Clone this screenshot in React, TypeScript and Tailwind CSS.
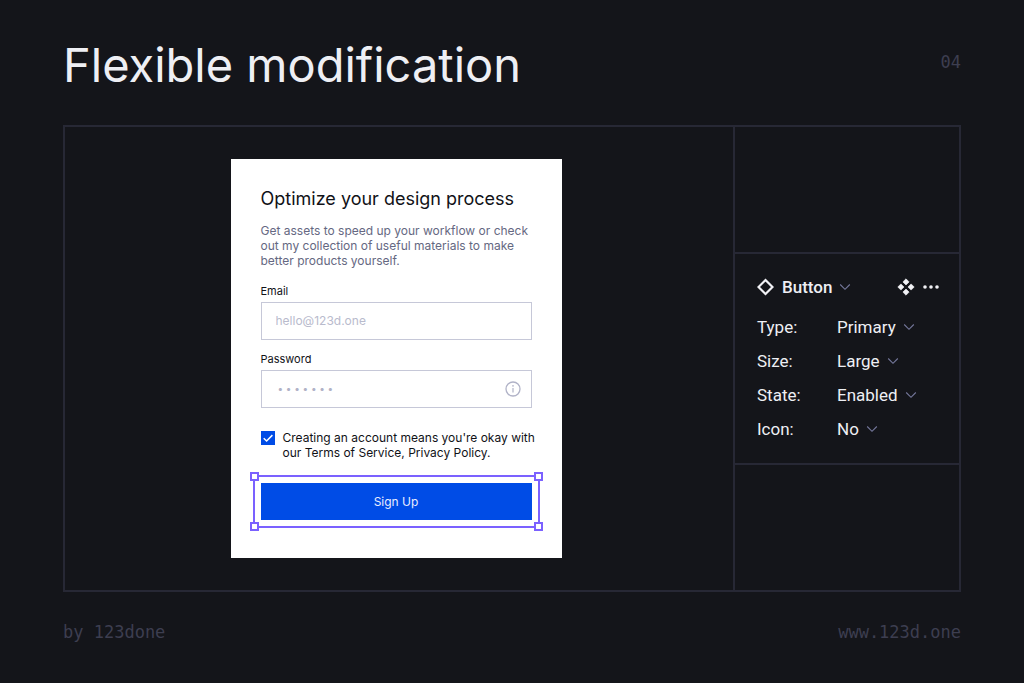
import { useState } from "react";

const properties = [
  { name: "Type", options: ["Primary", "Secondary"] },
  { name: "Size", options: ["Large", "Small"] },
  { name: "State", options: ["Enabled", "Disabled"] },
  { name: "Icon", options: ["No", "Yes"] },
];

const handles = [
  "-left-[5px] -top-[5px]",
  "-right-[5px] -top-[5px]",
  "-left-[5px] -bottom-[5px]",
  "-right-[5px] -bottom-[5px]",
];

function Chevron() {
  return (
    <svg width="12" height="8" viewBox="0 0 12 8" fill="none" stroke="#74779a" strokeWidth="1.1" aria-hidden="true" className="pointer-events-none -mx-px shrink-0">
      <path d="M1.2 1.5 6 6.3 10.8 1.5" />
    </svg>
  );
}

function SignUpForm() {
  const [accepted, setAccepted] = useState(true);
  return (
    <form
      onSubmit={(event) => event.preventDefault()}
      className="w-[331px] bg-white px-[30px] pb-[38px] pt-7 text-[#111217]"
    >
      <h2 className="whitespace-nowrap text-[18px] leading-6">Optimize your design process</h2>
      <p className="mt-3 whitespace-nowrap text-[12px] leading-[15px] text-[#656882]">
        Get assets to speed up your workflow or check
        <br />
        out my collection of useful materials to make
        <br />
        better products yourself.
      </p>
      <label htmlFor="email" className="mt-4 block text-[11px] leading-[15px]">
        Email
      </label>
      <input
        id="email"
        type="email"
        placeholder="hello@123d.one"
        className="mt-[3px] block h-[38px] w-full border border-[#c6c8d8] px-3.5 pb-0.5 text-[12px] outline-none placeholder:text-[#b9bbcd]"
      />
      <label htmlFor="password" className="mt-3 block text-[11px] leading-[15px]">
        Password
      </label>
      <div className="mt-[3px] flex h-[38px] items-center border border-[#c6c8d8] pl-4 pr-2.5">
        <input
          id="password"
          type="password"
          placeholder="•&#8202;&#8202;&#8202;•&#8202;&#8202;&#8202;•&#8202;&#8202;&#8202;•&#8202;&#8202;&#8202;•&#8202;&#8202;&#8202;•&#8202;&#8202;&#8202;•"
          className="h-full min-w-0 flex-1 pb-0.5 text-[10px] outline-none placeholder:text-[#b0b2c7]"
        />
        <button type="button" aria-label="Password information">
          <svg width="16" height="16" viewBox="0 0 16 16" fill="none" stroke="#b0b2c7" aria-hidden="true">
            <circle cx="8" cy="8" r="7" strokeWidth="1.3" />
            <path d="M8 7v4.5" strokeWidth="1.2" />
            <circle cx="8" cy="4.9" r=".8" fill="#b0b2c7" stroke="none" />
          </svg>
        </button>
      </div>
      <label className="mt-[22px] flex gap-2">
        <span className="relative mt-px size-3.5 shrink-0">
          <input
            type="checkbox"
            checked={accepted}
            onChange={(event) => setAccepted(event.target.checked)}
            className="block size-3.5 appearance-none border border-[#004ce6] checked:bg-[#004ce6]"
          />
          {accepted && (
            <svg viewBox="0 0 14 14" fill="none" stroke="#fff" strokeWidth="1.5" aria-hidden="true" className="pointer-events-none absolute inset-0 size-3.5">
              <path d="M2.7 7.2 5.6 10 11.4 4.1" />
            </svg>
          )}
        </span>
        <span className="whitespace-nowrap text-[12px] leading-[15px]">
          Creating an account means you're okay with
          <br />
          our Terms of Service, Privacy Policy.
        </span>
      </label>
      <div className="relative mt-[23px]">
        <button type="submit" className="block h-[37px] w-full bg-[#004ce6] text-[12px] text-[#e9edff]">
          Sign Up
        </button>
        <div className="pointer-events-none absolute -inset-2 border-2 border-[#7b61ff]">
          {handles.map((place) => (
            <span key={place} className={`absolute size-[9px] border-2 border-[#7b61ff] bg-white ${place}`} />
          ))}
        </div>
      </div>
    </form>
  );
}

function PropertyPanel() {
  return (
    <section className="border-y-2 border-[#272835] px-[22px] pb-4 pt-5 font-[Roboto,sans-serif] text-[17px] text-[#eeeff4]">
      <div className="flex h-[26px] items-center justify-between">
        <button type="button" className="flex items-center gap-2 font-medium">
          <svg width="17" height="18" viewBox="0 0 17 18" fill="none" stroke="#f1f1f5" strokeWidth="2.2" aria-hidden="true">
            <path d="M8.5 2 15.5 9 8.5 16 1.5 9Z" />
          </svg>
          Button
          <Chevron />
        </button>
        <div className="-mr-0.5 flex items-center gap-2">
          <button type="button" aria-label="Go to main component">
            <svg width="18" height="18" viewBox="0 0 18 18" fill="#f1f1f5" stroke="#f1f1f5" strokeWidth=".6" strokeLinejoin="round" aria-hidden="true">
              <path d="M9 .8 12.1 3.9 9 7 5.9 3.9ZM9 11 12.1 14.1 9 17.2 5.9 14.1ZM3.9 5.9 7 9 3.9 12.1.8 9ZM14.1 5.9 17.2 9 14.1 12.1 11 9Z" />
            </svg>
          </button>
          <button type="button" aria-label="More options">
            <svg width="16" height="4" viewBox="0 0 16 4" fill="#f1f1f5" aria-hidden="true">
              <circle cx="2" cy="2" r="1.8" />
              <circle cx="8" cy="2" r="1.8" />
              <circle cx="14" cy="2" r="1.8" />
            </svg>
          </button>
        </div>
      </div>
      <div className="mt-2.5">
        {properties.map(({ name, options }) => (
          <div key={name} className="flex h-[34px] items-center">
            <label htmlFor={name} className="w-20">
              {name}:
            </label>
            <div className="flex items-center">
              <select id={name} defaultValue={options[0]} className="-mr-2.5 appearance-none bg-transparent pr-[18px] outline-none field-sizing-content">
                {options.map((option) => (
                  <option key={option}>{option}</option>
                ))}
              </select>
              <Chevron />
            </div>
          </div>
        ))}
      </div>
    </section>
  );
}

export default function App() {
  return (
    <div className="flex min-h-screen flex-col bg-[#14151a] px-[63px] font-[Inter,sans-serif]">
      <header className="flex h-[125px] justify-between">
        <h1 className="pt-9 text-[47px] leading-[58px] text-[#eeeff4]">Flexible modification</h1>
        <span className="pt-[50px] font-['DejaVu_Sans_Mono',monospace] text-[17px] leading-6 text-[#3d3e50]">04</span>
      </header>
      <main className="grid flex-1 grid-cols-[1fr_226px] border-2 border-[#272835]">
        <div className="flex items-center justify-center py-8 pr-1.5">
          <SignUpForm />
        </div>
        <aside className="grid grid-rows-[125fr_auto_125fr] border-l-2 border-[#272835]">
          <div />
          <PropertyPanel />
          <div />
        </aside>
      </main>
      <footer className="flex h-[92px] justify-between pt-7 font-['DejaVu_Sans_Mono',monospace] text-[17px] leading-6 text-[#3d3e50]">
        <span>by 123done</span>
        <a href="#site">www.123d.one</a>
      </footer>
    </div>
  );
}
